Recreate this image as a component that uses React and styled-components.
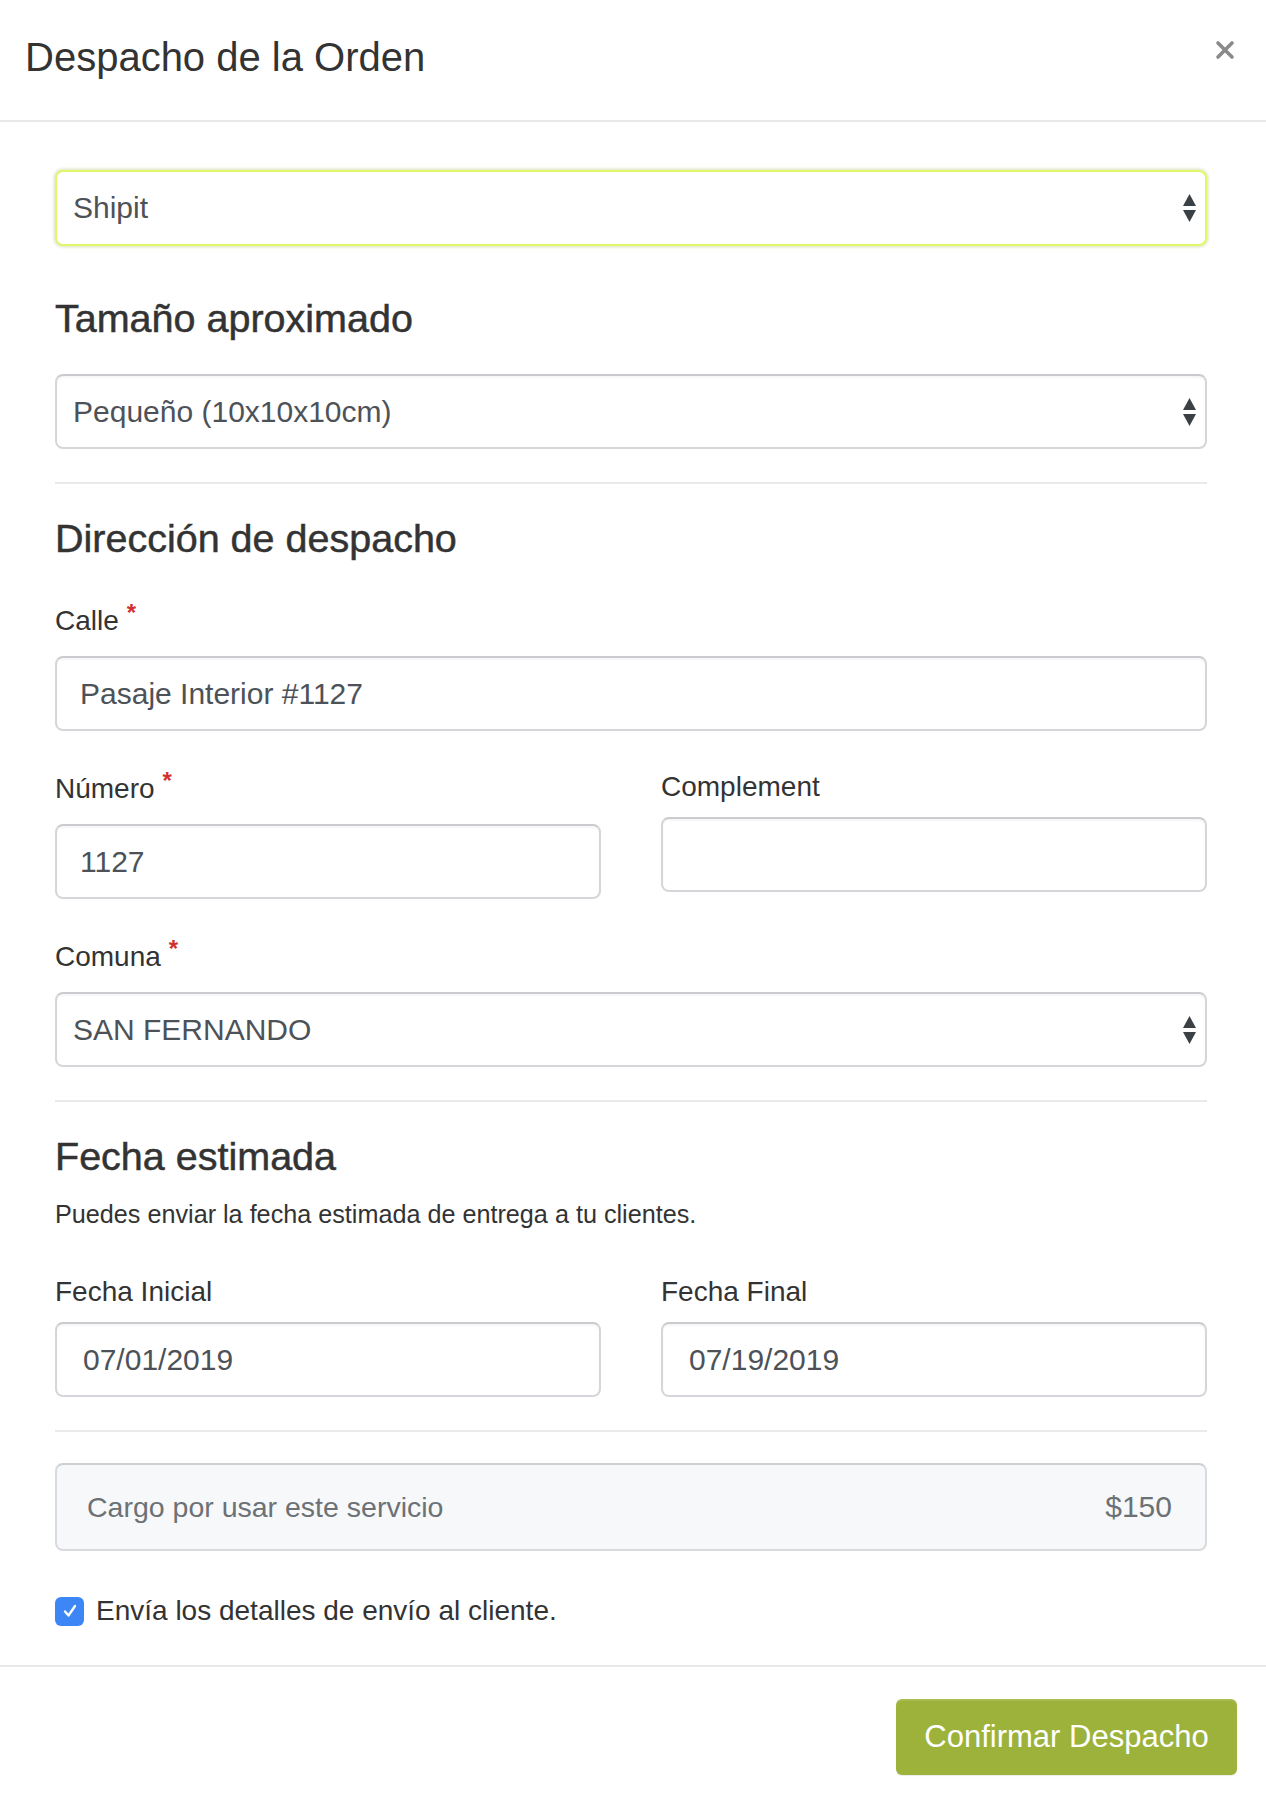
import React from "react";
import styled, { createGlobalStyle } from "styled-components";

const GlobalStyle = createGlobalStyle`
  html, body { margin: 0; padding: 0; background: #ffffff; }
  body {
    font-family: "Liberation Sans", Arial, sans-serif;
    color: #333333;
    -webkit-font-smoothing: antialiased;
  }
  * { box-sizing: border-box; }
`;

const Modal = styled.div`
  width: 100%;
  background: #fff;
`;

const Header = styled.header`
  height: 122px;
  border-bottom: 2px solid #e8e8e8;
  padding: 33px 31px 0 25px;
  display: flex;
  justify-content: space-between;
  align-items: flex-start;
`;

const Title = styled.h4`
  margin: 0;
  font-size: 40px;
  line-height: 48px;
  font-weight: 400;
  color: #333;
`;

const Close = styled.button`
  margin-top: 7px;
  padding: 0;
  border: 0;
  background: none;
  width: 20px;
  height: 20px;
  display: flex;
  color: #8a8a8a;
  cursor: pointer;
`;

const Body = styled.div`
  padding: 48px 59px 34px 55px;
`;

const SectionTitle = styled.h3`
  margin: ${(p) => p.$mt ?? 0}px 0 ${(p) => p.$mb ?? 0}px;
  font-size: 39.5px;
  line-height: 48px;
  font-weight: 400;
  color: #333;
  -webkit-text-stroke: 0.5px #333;
`;

const Divider = styled.hr`
  margin: 33px 0 ${(p) => p.$mb ?? 30}px;
  border: 0;
  height: 2px;
  background: #e9eaeb;
`;

const Description = styled.p`
  margin: 17px 0 0;
  font-size: 25.2px;
  line-height: 34px;
  color: #333;
`;

const SelectBox = styled.div`
  height: ${(p) => (p.$focused ? 76 : 75)}px;
  display: flex;
  align-items: center;
  justify-content: space-between;
  padding: 0 8px 0 16px;
  border-radius: 8px;
  background: #fff;
  font-size: 30px;
  color: #4d5258;
  border: 2px solid ${(p) => (p.$focused ? "#e2f66c" : "#d4d6d9")};
  border-top-color: ${(p) => (p.$focused ? "#e2f66c" : "#c9cbce")};
  box-shadow: ${(p) =>
    p.$focused
      ? "0 0 2px 2px rgba(205, 214, 160, 0.45)"
      : "inset 0 2px 2px rgba(0,0,0,0.04)"};
`;

const Field = styled.div`
  margin-top: ${(p) => p.$mt ?? 0}px;
`;

const Label = styled.label`
  display: block;
  font-size: 28px;
  line-height: 40px;
  color: #333;
  padding-top: ${(p) => (p.$required ? 2 : 0)}px;
  margin-bottom: ${(p) => (p.$required ? 15 : 10)}px;
`;

const Star = styled.span`
  margin-left: 8px;
  font-size: 24px;
  font-weight: 700;
  line-height: 0;
  vertical-align: 9px;
  color: #d0312d;
`;

const Input = styled.input`
  display: block;
  width: 100%;
  height: 75px;
  margin: 0;
  padding: 0 ${(p) => (p.$date ? 26 : 23)}px;
  border-radius: 8px;
  border: 2px solid #d4d6d9;
  border-top-color: #c9cbce;
  box-shadow: inset 0 2px 2px rgba(0,0,0,0.04);
  background: #fff;
  font-family: "Liberation Sans", Arial, sans-serif;
  font-size: 30px;
  color: #4d5258;
  outline: none;
`;

const Row = styled.div`
  display: grid;
  grid-template-columns: 1fr 1fr;
  column-gap: 60px;
  margin-top: ${(p) => p.$mt ?? 0}px;
`;

const ChargeBox = styled.div`
  height: 88px;
  display: flex;
  align-items: center;
  justify-content: space-between;
  padding: 0 33px 0 30px;
  background: #f7f8fa;
  border: 2px solid #d8dadd;
  border-top-color: #cdd0d3;
  border-radius: 8px;
  color: #6c7176;
`;

const ChargeText = styled.span`
  font-size: 28.5px;
`;

const ChargePrice = styled.span`
  font-size: 30px;
`;

const CheckRow = styled.label`
  margin-top: 40px;
  height: 40px;
  display: flex;
  align-items: center;
  gap: 12px;
  font-size: 28px;
  color: #333;
`;

const CheckBox = styled.span`
  width: 29px;
  height: 29px;
  border-radius: 6px;
  background: #3d86f6;
  display: flex;
  align-items: center;
  justify-content: center;
`;

const Footer = styled.footer`
  border-top: 2px solid #e8e8e8;
  padding: 32px 29px 26px;
  display: flex;
  justify-content: flex-end;
`;

const PrimaryButton = styled.button`
  width: 341px;
  height: 76px;
  border: 0;
  border-radius: 6px;
  background: #9db23a;
  box-shadow: inset 0 2px 0 rgba(255,255,255,0.12), 0 1px 1px rgba(0,0,0,0.08);
  color: #fff;
  font-family: "Liberation Sans", Arial, sans-serif;
  font-size: 31px;
  cursor: pointer;
`;

const Arrows = () => (
  <svg width="15" height="30" viewBox="0 0 15 30" aria-hidden="true">
    <polygon points="7.5,1 14,13 1,13" fill="#3b4045" />
    <polygon points="1,17 14,17 7.5,29" fill="#3b4045" />
  </svg>
);

const Select = ({ value, focused }) => (
  <SelectBox $focused={focused}>
    <span>{value}</span>
    <Arrows />
  </SelectBox>
);

const CloseIcon = () => (
  <svg width="20" height="20" viewBox="0 0 20 20" aria-hidden="true">
    <path d="M3 3 L17 17 M17 3 L3 17" stroke="currentColor" strokeWidth="3.6" strokeLinecap="round" />
  </svg>
);

const CheckIcon = () => (
  <svg width="18" height="18" viewBox="0 0 18 18" aria-hidden="true">
    <path d="M4 9.5 L7.5 13.5 L14 4" stroke="#fff" strokeWidth="2.4" fill="none" strokeLinecap="round" strokeLinejoin="round" />
  </svg>
);

export default function App() {
  return (
    <>
      <GlobalStyle />
      <Modal>
        <Header>
          <Title>Despacho de la Orden</Title>
          <Close aria-label="Cerrar">
            <CloseIcon />
          </Close>
        </Header>
        <Body>
          <Select value="Shipit" focused />
          <SectionTitle $mt={48} $mb={32}>Tamaño aproximado</SectionTitle>
          <Select value="Pequeño (10x10x10cm)" />
          <Divider />
          <SectionTitle $mb={37}>Dirección de despacho</SectionTitle>
          <Field>
            <Label $required>
              Calle<Star>*</Star>
            </Label>
            <Input defaultValue="Pasaje Interior #1127" readOnly />
          </Field>
          <Row $mt={36}>
            <Field>
              <Label $required>
                Número<Star>*</Star>
              </Label>
              <Input defaultValue="1127" readOnly />
            </Field>
            <Field>
              <Label>Complement</Label>
              <Input defaultValue="" readOnly />
            </Field>
          </Row>
          <Field $mt={36}>
            <Label $required>
              Comuna<Star>*</Star>
            </Label>
            <Select value="SAN FERNANDO" />
          </Field>
          <Divider />
          <SectionTitle>Fecha estimada</SectionTitle>
          <Description>Puedes enviar la fecha estimada de entrega a tu clientes.</Description>
          <Row $mt={41}>
            <Field>
              <Label>Fecha Inicial</Label>
              <Input $date defaultValue="07/01/2019" readOnly />
            </Field>
            <Field>
              <Label>Fecha Final</Label>
              <Input $date defaultValue="07/19/2019" readOnly />
            </Field>
          </Row>
          <Divider $mb={31} />
          <ChargeBox>
            <ChargeText>Cargo por usar este servicio</ChargeText>
            <ChargePrice>$150</ChargePrice>
          </ChargeBox>
          <CheckRow>
            <CheckBox>
              <CheckIcon />
            </CheckBox>
            Envía los detalles de envío al cliente.
          </CheckRow>
        </Body>
        <Footer>
          <PrimaryButton>Confirmar Despacho</PrimaryButton>
        </Footer>
      </Modal>
    </>
  );
}
